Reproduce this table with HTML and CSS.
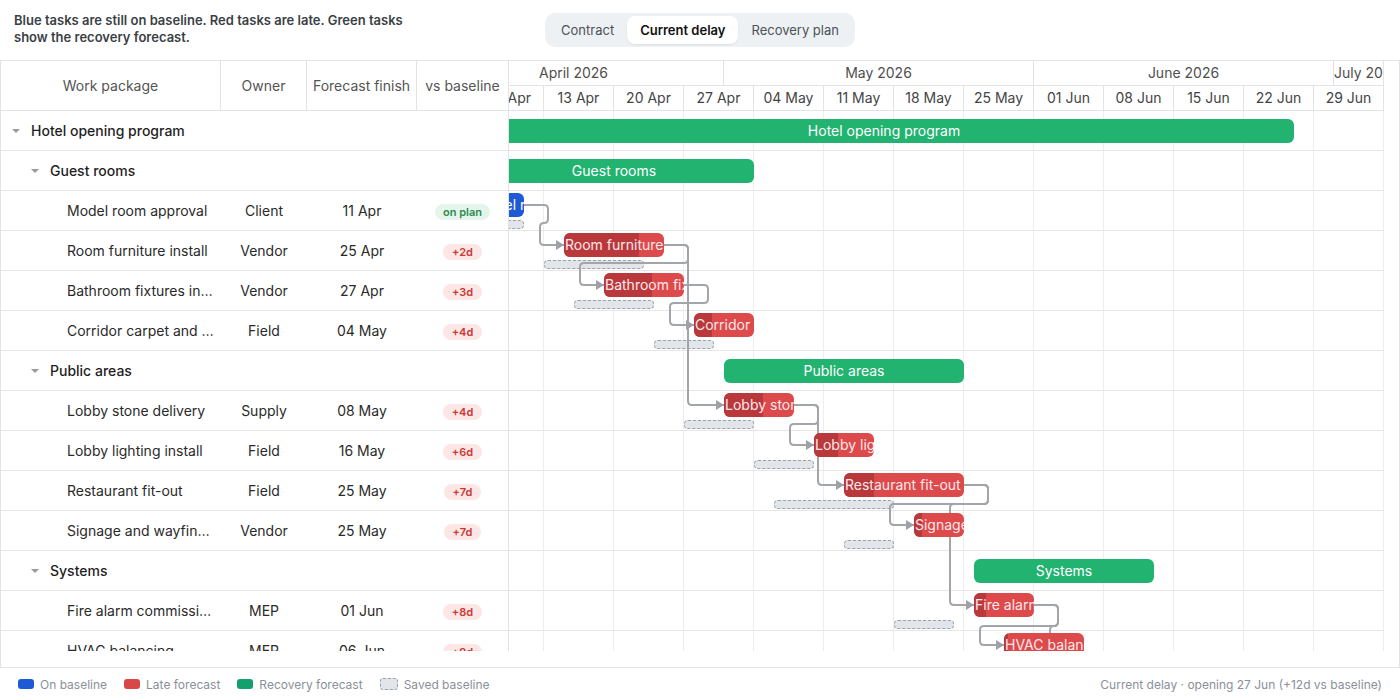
FILE: index.html
```html
<!DOCTYPE html>
<html lang="en">
<head>
<meta charset="utf-8">
<title>Hotel opening program</title>
<link rel="stylesheet" href="styles.css">
</head>
<body>
<header class="topbar">
  <p class="intro">Blue tasks are still on baseline. Red tasks are late. Green tasks show the recovery forecast.</p>
  <nav class="segmented">
    <button class="seg">Contract</button>
    <button class="seg active">Current delay</button>
    <button class="seg">Recovery plan</button>
  </nav>
  <div class="spacer"></div>
</header>

<section class="gantt">
  <div class="gantt-main">
    <div class="grid">
      <div class="grid-head">
        <div class="hcell">Work package</div>
        <div class="hcell">Owner</div>
        <div class="hcell">Forecast finish</div>
        <div class="hcell last">vs baseline</div>
      </div>
      <div class="grid-body">
        <div class="grow summary"><div class="name lvl0"><span class="toggle"></span><span class="txt">Hotel opening program</span></div></div>
        <div class="grow summary"><div class="name lvl1"><span class="toggle"></span><span class="txt">Guest rooms</span></div></div>
        <div class="grow"><div class="name leaf"><span class="txt">Model room approval</span></div><div class="cell">Client</div><div class="cell">11 Apr</div><div class="cell"><span class="pill ok">on plan</span></div></div>
        <div class="grow"><div class="name leaf"><span class="txt">Room furniture install</span></div><div class="cell">Vendor</div><div class="cell">25 Apr</div><div class="cell"><span class="pill late">+2d</span></div></div>
        <div class="grow"><div class="name leaf"><span class="txt">Bathroom fixtures install</span></div><div class="cell">Vendor</div><div class="cell">27 Apr</div><div class="cell"><span class="pill late">+3d</span></div></div>
        <div class="grow"><div class="name leaf"><span class="txt">Corridor carpet and lighting</span></div><div class="cell">Field</div><div class="cell">04 May</div><div class="cell"><span class="pill late">+4d</span></div></div>
        <div class="grow summary"><div class="name lvl1"><span class="toggle"></span><span class="txt">Public areas</span></div></div>
        <div class="grow"><div class="name leaf"><span class="txt">Lobby stone delivery</span></div><div class="cell">Supply</div><div class="cell">08 May</div><div class="cell"><span class="pill late">+4d</span></div></div>
        <div class="grow"><div class="name leaf"><span class="txt">Lobby lighting install</span></div><div class="cell">Field</div><div class="cell">16 May</div><div class="cell"><span class="pill late">+6d</span></div></div>
        <div class="grow"><div class="name leaf"><span class="txt">Restaurant fit-out</span></div><div class="cell">Field</div><div class="cell">25 May</div><div class="cell"><span class="pill late">+7d</span></div></div>
        <div class="grow"><div class="name leaf"><span class="txt">Signage and wayfinding</span></div><div class="cell">Vendor</div><div class="cell">25 May</div><div class="cell"><span class="pill late">+7d</span></div></div>
        <div class="grow summary"><div class="name lvl1"><span class="toggle"></span><span class="txt">Systems</span></div></div>
        <div class="grow"><div class="name leaf"><span class="txt">Fire alarm commissioning</span></div><div class="cell">MEP</div><div class="cell">01 Jun</div><div class="cell"><span class="pill late">+8d</span></div></div>
        <div class="grow"><div class="name leaf"><span class="txt">HVAC balancing</span></div><div class="cell">MEP</div><div class="cell">06 Jun</div><div class="cell"><span class="pill late">+9d</span></div></div>
      </div>
    </div>

    <div class="chart">
      <div class="chart-inner">
        <div class="scale-row">
          <div class="mcell" style="width:20px"></div>
          <div class="mcell" style="width:300px">April 2026</div>
          <div class="mcell" style="width:310px">May 2026</div>
          <div class="mcell" style="width:300px">June 2026</div>
          <div class="mcell" style="width:50px">July 2026</div>
        </div>
        <div class="scale-row">
          <div class="wcell"></div>
          <div class="wcell">06 Apr</div>
          <div class="wcell">13 Apr</div>
          <div class="wcell">20 Apr</div>
          <div class="wcell">27 Apr</div>
          <div class="wcell">04 May</div>
          <div class="wcell">11 May</div>
          <div class="wcell">18 May</div>
          <div class="wcell">25 May</div>
          <div class="wcell">01 Jun</div>
          <div class="wcell">08 Jun</div>
          <div class="wcell">15 Jun</div>
          <div class="wcell">22 Jun</div>
          <div class="wcell">29 Jun</div>
        </div>
        <div class="chart-body">
          <div class="crow"><div class="bar sum" style="left:70px;width:820px">Hotel opening program</div></div>
          <div class="crow"><div class="bar sum" style="left:70px;width:280px">Guest rooms</div></div>
          <div class="crow">
            <div class="base" style="left:70px;width:50px"></div>
            <div class="bar task blue" style="left:70px;width:50px"><span class="lbl">Model room approval</span></div>
          </div>
          <div class="crow">
            <div class="base" style="left:140px;width:100px"></div>
            <div class="bar task late" style="left:160px;width:100px"><i class="prog" style="width:75%"></i><span class="lbl">Room furniture install</span></div>
          </div>
          <div class="crow">
            <div class="base" style="left:170px;width:80px"></div>
            <div class="bar task late" style="left:200px;width:80px"><i class="prog" style="width:60%"></i><span class="lbl">Bathroom fixtures install</span></div>
          </div>
          <div class="crow">
            <div class="base" style="left:250px;width:60px"></div>
            <div class="bar task late" style="left:290px;width:60px"><i class="prog" style="width:30%"></i><span class="lbl">Corridor carpet and lighting</span></div>
          </div>
          <div class="crow"><div class="bar sum" style="left:320px;width:240px">Public areas</div></div>
          <div class="crow">
            <div class="base" style="left:280px;width:70px"></div>
            <div class="bar task late" style="left:320px;width:70px"><i class="prog" style="width:56%"></i><span class="lbl">Lobby stone delivery</span></div>
          </div>
          <div class="crow">
            <div class="base" style="left:350px;width:60px"></div>
            <div class="bar task late" style="left:410px;width:60px"><i class="prog" style="width:40%"></i><span class="lbl">Lobby lighting install</span></div>
          </div>
          <div class="crow">
            <div class="base" style="left:370px;width:120px"></div>
            <div class="bar task late" style="left:440px;width:120px"><i class="prog" style="width:25%"></i><span class="lbl">Restaurant fit-out</span></div>
          </div>
          <div class="crow">
            <div class="base" style="left:440px;width:50px"></div>
            <div class="bar task late" style="left:510px;width:50px"><i class="prog" style="width:16%"></i><span class="lbl">Signage and wayfinding</span></div>
          </div>
          <div class="crow"><div class="bar sum" style="left:570px;width:180px">Systems</div></div>
          <div class="crow">
            <div class="base" style="left:490px;width:60px"></div>
            <div class="bar task late" style="left:570px;width:60px"><i class="prog" style="width:20%"></i><span class="lbl">Fire alarm commissioning</span></div>
          </div>
          <div class="crow">
            <div class="base" style="left:550px;width:80px"></div>
            <div class="bar task late" style="left:600px;width:80px"><i class="prog" style="width:5%"></i><span class="lbl">HVAC balancing</span></div>
          </div>

          <svg class="links" width="980" height="560" viewBox="0 0 980 560" aria-hidden="true">
            <defs>
              <marker id="ah" viewBox="0 0 8 10" refX="8" refY="5" markerWidth="8" markerHeight="10" markerUnits="userSpaceOnUse" orient="auto">
                <path d="M0 0 L8 5 L0 10 Z" fill="#9ea2a7"/>
              </marker>
            </defs>
            <g fill="none" stroke="#a2a5a9" stroke-width="2" stroke-linejoin="round">
              <path d="M120 94 H140 Q144 94 144 98 V108 Q144 112 140 112 Q136 112 136 116 V130 Q136 134 140 134 H160" marker-end="url(#ah)"/>
              <path d="M260 134 H280 Q284 134 284 138 V148 Q284 152 280 152 H180 Q176 152 176 156 V170 Q176 174 180 174 H200" marker-end="url(#ah)"/>
              <path d="M260 134 H280 Q284 134 284 138 V290 Q284 294 288 294 H320" marker-end="url(#ah)"/>
              <path d="M280 174 H300 Q304 174 304 178 V188 Q304 192 300 192 H270 Q266 192 266 196 V210 Q266 214 270 214 H290" marker-end="url(#ah)"/>
              <path d="M390 294 H410 Q414 294 414 298 V309 Q414 313 410 313 H390 Q386 313 386 317 V330 Q386 334 390 334 H410" marker-end="url(#ah)"/>
              <path d="M390 294 H410 Q414 294 414 298 V370 Q414 374 418 374 H440" marker-end="url(#ah)"/>
              <path d="M560 374 H580 Q584 374 584 378 V389 Q584 393 580 393 H490 Q486 393 486 397 V410 Q486 414 490 414 H510" marker-end="url(#ah)"/>
              <path d="M560 374 H580 Q584 374 584 378 V389 Q584 393 580 393 H550 Q546 393 546 397 V490 Q546 494 550 494 H570" marker-end="url(#ah)"/>
              <path d="M630 494 H650 Q654 494 654 498 V511 Q654 515 650 515 H580 Q576 515 576 519 V530 Q576 534 580 534 H600" marker-end="url(#ah)"/>
              <path d="M630 494 H650 Q654 494 654 498 V511 Q654 515 650 515 Q646 515 646 519 V560"/>
            </g>
          </svg>
        </div>
      </div>
    </div>
  </div>
</section>

<footer class="footer">
  <div class="legend">
    <span class="li"><i class="sw sw-blue"></i>On baseline</span>
    <span class="li"><i class="sw sw-red"></i>Late forecast</span>
    <span class="li"><i class="sw sw-green"></i>Recovery forecast</span>
    <span class="li"><i class="sw sw-base"></i>Saved baseline</span>
  </div>
  <div class="status">Current delay · opening 27 Jun (+12d vs baseline)</div>
</footer>
</body>
</html>
```

FILE: styles.css
```css
* { box-sizing: border-box; }
html, body { margin: 0; padding: 0; }
body {
  width: 1400px;
  height: 700px;
  overflow: hidden;
  background: #fff;
  color: #222;
  font-family: Inter, "Noto Sans", "Liberation Sans", sans-serif;
}

/* top bar */
.topbar {
  height: 60px;
  display: grid;
  grid-template-columns: 1fr auto 1fr;
  align-items: center;
  padding: 0 14px;
}
.intro {
  margin: 0;
  align-self: start;
  padding-top: 12px;
  width: 410px;
  font-size: 13px;
  line-height: 17px;
  font-weight: 600;
  color: #3b3f45;
}
.segmented {
  display: flex;
  height: 34px;
  padding: 3px;
  border-radius: 10px;
  background: #eef1f4;
}
.seg {
  font-family: inherit;
  font-size: 13px;
  height: 28px;
  padding: 0 13px;
  border: 0;
  border-radius: 8px;
  background: transparent;
  color: #4b5259;
  cursor: pointer;
}
.seg.active {
  background: #fff;
  color: #111;
  font-weight: 600;
  box-shadow: 0 1px 2px rgba(0, 0, 0, 0.08);
}

/* gantt frame */
.gantt {
  height: 608px;
  border: 1px solid #e3e3e3;
}
.gantt-main {
  display: flex;
  height: 590px;
}

/* grid */
.grid {
  flex: none;
  width: 508px;
  display: flex;
  flex-direction: column;
  border-right: 1px solid #e3e3e3;
}
.grid-head {
  flex: none;
  height: 50px;
  display: grid;
  grid-template-columns: 220px 86px 110px 91px;
  border-bottom: 1px solid #e3e3e3;
}
.hcell {
  display: flex;
  align-items: center;
  justify-content: center;
  font-size: 14px;
  color: #555;
  border-right: 1px solid #e3e3e3;
  white-space: nowrap;
}
.hcell.last { border-right: 0; }
.grid-body {
  flex: 1;
  overflow: hidden;
}
.grow {
  height: 40px;
  display: grid;
  grid-template-columns: 220px 86px 110px 91px;
  align-items: center;
  border-bottom: 1px solid #e6e6e6;
  font-size: 14px;
  color: #2a2a2a;
}
.name {
  display: flex;
  align-items: center;
  min-width: 0;
  padding-right: 6px;
}
.summary .name { grid-column: 1 / -1; font-weight: 500; color: #1f1f1f; }
.name.lvl0 { padding-left: 11px; }
.name.lvl1 { padding-left: 30px; }
.name.leaf { padding-left: 66px; }
.toggle {
  flex: none;
  width: 0;
  height: 0;
  margin-right: 11px;
  border-left: 4px solid transparent;
  border-right: 4px solid transparent;
  border-top: 4px solid #9a9a9a;
}
.txt {
  overflow: hidden;
  white-space: nowrap;
  text-overflow: ellipsis;
}
.cell {
  text-align: center;
  white-space: nowrap;
}
.pill {
  display: inline-block;
  height: 16px;
  line-height: 16px;
  padding: 0 9px;
  border-radius: 8px;
  font-size: 11px;
  font-weight: 600;
}
.pill.ok { background: #e6f5eb; color: #2d8a4e; padding: 0 8px; }
.pill.late { background: #fde6e6; color: #c63a36; }

/* chart */
.chart {
  flex: none;
  width: 875px;
  overflow: hidden;
}
.chart-inner {
  width: 980px;
  margin-left: -105px;
}
.scale-row {
  display: flex;
  height: 25px;
  border-bottom: 1px solid #e3e3e3;
}
.mcell, .wcell {
  flex: none;
  border-right: 1px solid #e3e3e3;
  text-align: center;
  overflow: hidden;
  white-space: nowrap;
  font-size: 14px;
  line-height: 24px;
  color: #4f4f4f;
}
.wcell { width: 70px; color: #444; }
.chart-body {
  position: relative;
  height: 540px;
  background-image: repeating-linear-gradient(to right, transparent 0 69px, #ededed 69px 70px);
}
.crow {
  position: relative;
  height: 40px;
  border-bottom: 1px solid #e6e6e6;
}
.bar {
  position: absolute;
  z-index: 2;
  height: 24px;
  border-radius: 6px;
  overflow: hidden;
  white-space: nowrap;
  font-size: 14px;
  line-height: 24px;
}
.bar.sum {
  top: 8px;
  background: #22b371;
  color: #fff;
  text-align: center;
  font-weight: 400;
}
.bar.task { top: 2px; }
.bar.blue { background: #1f5ad5; color: #fff; }
.bar.late { background: #dc4a4b; color: #ffe8ea; }
.prog {
  position: absolute;
  left: 0;
  top: 0;
  bottom: 0;
  background: #b9383c;
}
.lbl {
  position: relative;
  padding-left: 1px;
}
.base {
  position: absolute;
  z-index: 0;
  top: 29px;
  height: 9px;
  border: 1px dashed #9aa0a8;
  border-radius: 4px;
  background: #e2e5ea;
}
.links {
  position: absolute;
  left: 0;
  top: 0;
  z-index: 1;
  pointer-events: none;
}

/* footer */
.footer {
  height: 32px;
  display: flex;
  align-items: center;
  justify-content: space-between;
  padding: 0 18px;
  font-size: 12px;
  color: #8a9099;
}
.legend {
  display: flex;
  align-items: center;
  gap: 17px;
}
.li {
  display: flex;
  align-items: center;
  gap: 6px;
}
.sw {
  display: inline-block;
  width: 16px;
  height: 10px;
  border-radius: 3px;
}
.sw-blue { background: #1f5ad5; }
.sw-red { background: #d94747; }
.sw-green { background: #13a06f; }
.sw-base {
  box-sizing: content-box;
  background: #e2e5ea;
  border: 1px dashed #9aa0a8;
}
```
